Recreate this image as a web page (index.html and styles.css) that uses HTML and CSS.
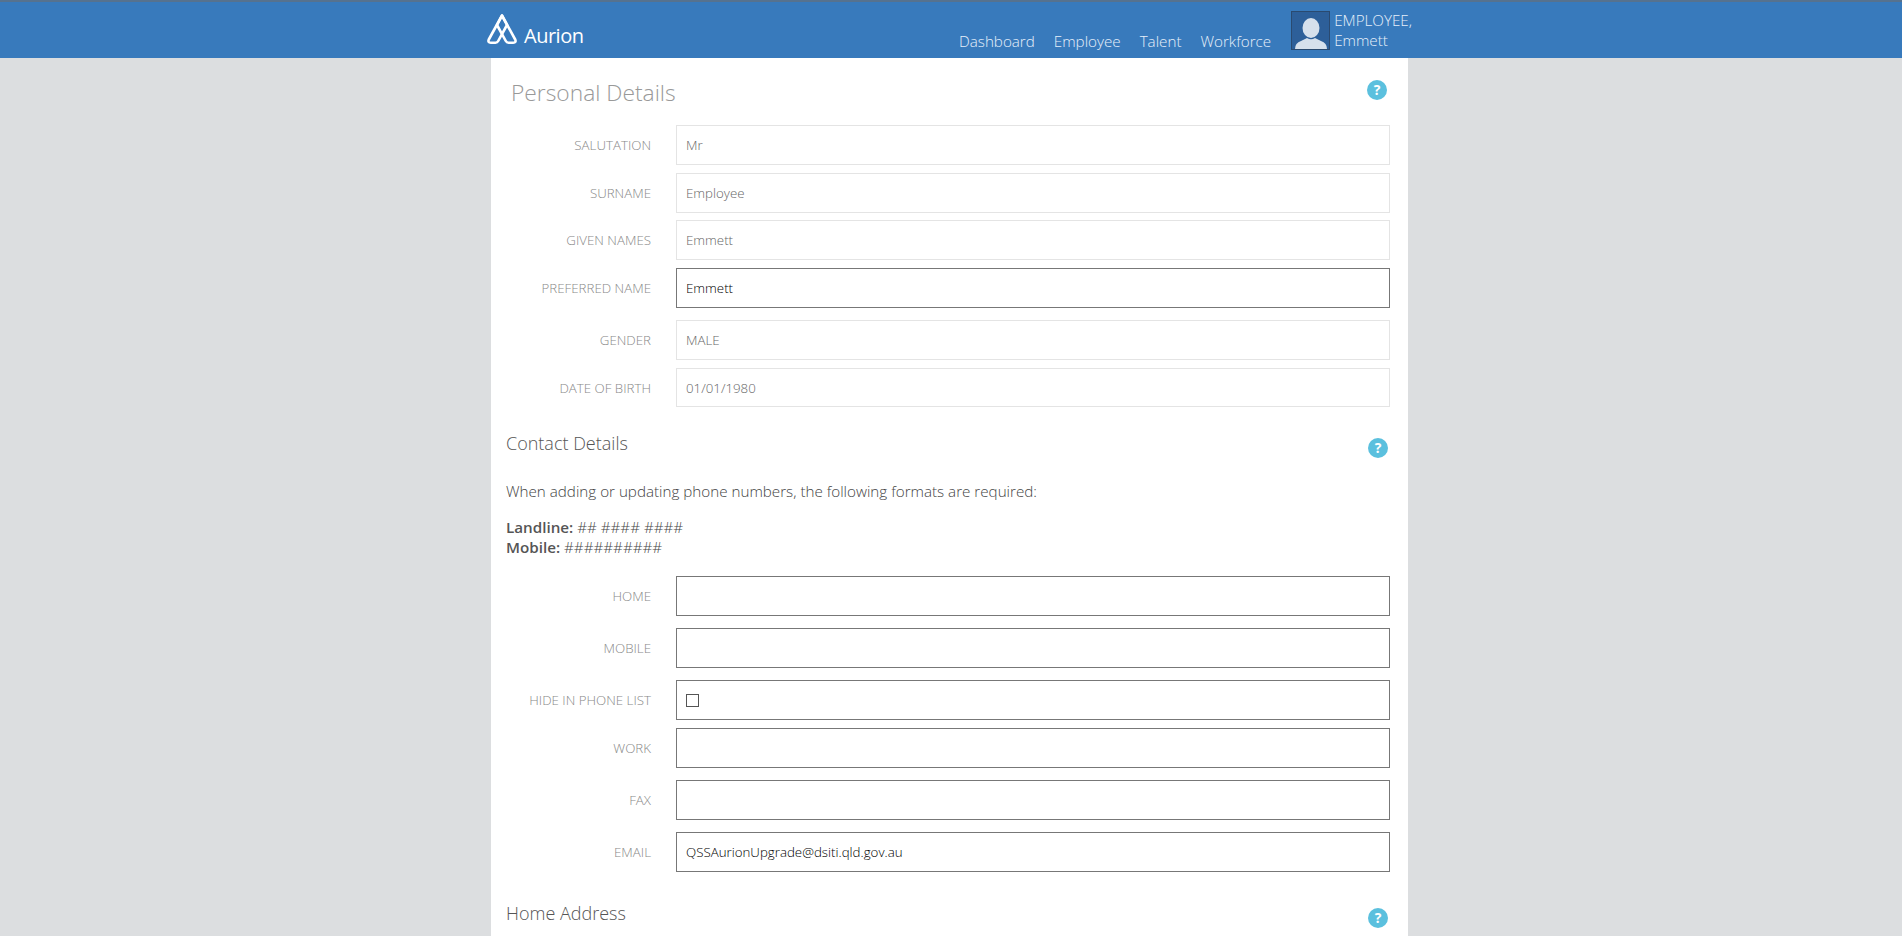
FILE: index.html
```html
<!DOCTYPE html>
<html>
<head>
    <meta charset="UTF-8">
    <title>Personal Details</title>
    <link rel="stylesheet" href="styles.css">
</head>
<body>
<header class="topbar">
    <div class="topbar-inner">
        <a class="logo" href="#">
            <svg class="logo-mark" viewBox="0 0 30 30" fill="none" stroke="#fff" stroke-width="2.600" stroke-linejoin="round">
                <path d="M15 1.500 L1.800 25.500 Q0.500 28.700 3.800 28.700 L8.500 28.700 Q10.300 28.700 11.200 27 L20 11 Z"/>
                <path d="M15 1.500 L28.200 25.500 Q29.500 28.700 26.200 28.700 L21.500 28.700 Q19.700 28.700 18.800 27 L10 11 Z"/>
            </svg>
            <span class="logo-text">Aurion</span>
        </a>
        <nav class="nav">
            <a href="#">Dashboard</a>
            <a href="#">Employee</a>
            <a href="#">Talent</a>
            <a href="#">Workforce</a>
            <div class="user">
                <div class="avatar">
                    <svg viewBox="0 0 37 37" fill="#d6e0ec">
                        <ellipse cx="19" cy="16" rx="8.500" ry="10"/>
                        <path d="M3 37 Q3 31 9 29 L15 26 Q19 28.500 23 26 L29 29 Q35 31 35 37 Z"/>
                    </svg>
                </div>
                <div class="user-name">EMPLOYEE,<br>Emmett</div>
            </div>
        </nav>
    </div>
</header>

<main class="panel">
    <div class="page-head">
        <h1>Personal Details</h1>
        <span class="help">?</span>
    </div>

    <form class="form">
        <div class="row"><label>SALUTATION</label><input class="ro" type="text" value="Mr" readonly></div>
        <div class="row row-tight"><label>SURNAME</label><input class="ro" type="text" value="Employee" readonly></div>
        <div class="row"><label>GIVEN NAMES</label><input class="ro" type="text" value="Emmett" readonly></div>
        <div class="row row-gap"><label>PREFERRED NAME</label><input type="text" value="Emmett"></div>
        <div class="row"><label>GENDER</label><input class="ro" type="text" value="MALE" readonly></div>
        <div class="row row-short"><label>DATE OF BIRTH</label><input class="ro" type="text" value="01/01/1980" readonly></div>

        <div class="section-head contact-head">
            <h2>Contact Details</h2>
            <span class="help">?</span>
        </div>
        <p class="note">When adding or updating phone numbers, the following formats are required:</p>
        <p class="formats"><b>Landline:</b> ## #### ####<br><b>Mobile:</b> ##########</p>

        <div class="row row-gap"><label>HOME</label><input type="text"></div>
        <div class="row row-gap"><label>MOBILE</label><input type="text"></div>
        <div class="row"><label>HIDE IN PHONE LIST</label><div class="check-box"><input class="check" type="checkbox"></div></div>
        <div class="row row-gap"><label>WORK</label><input type="text"></div>
        <div class="row row-gap"><label>FAX</label><input type="text"></div>
        <div class="row"><label>EMAIL</label><input type="text" value="QSSAurionUpgrade@dsiti.qld.gov.au"></div>

        <div class="section-head address-head">
            <h2>Home Address</h2>
            <span class="help">?</span>
        </div>
    </form>
</main>
</body>
</html>
```

FILE: styles.css
```css
html, body {
    height: 100%;
}
body {
    display: flex;
    flex-direction: column;
    margin: 0;
    background-color: #dcdee0;
    font-family: "Open Sans", sans-serif;
    font-size: 15.200px;
    font-weight: 300;
    color: #444;
}
a {
    text-decoration: none;
    color: inherit;
}

/* top bar */
.topbar {
    flex: none;
    height: 56px;
    background-color: #387abc;
    border-top: 2px solid #56728f;
}
.topbar-inner {
    display: flex;
    justify-content: space-between;
    width: 925px;
    height: 100%;
    margin-left: 487px;
}
.logo {
    display: flex;
    align-items: flex-end;
    height: 42px;
    color: #fff;
}
.logo-mark {
    width: 30px;
    height: 30px;
}
.logo-text {
    margin-left: 7px;
    margin-bottom: -7px;
    font-weight: 400;
    font-size: 20px;
    line-height: 30px;
    letter-spacing: -0.5px;
}
.nav {
    display: flex;
    align-items: flex-start;
    gap: 19px;
    color: #e6effa;
    line-height: 20px;
}
.nav > a {
    margin-top: 29px;
}
.user {
    display: flex;
    gap: 4px;
    margin-top: 9px;
    margin-left: 1px;
}
.avatar {
    width: 37px;
    height: 37px;
    background-color: #2d5f99;
    border: 1px solid #2a4a70;
}
.avatar svg {
    display: block;
    width: 37px;
    height: 37px;
}
.user-name {
    margin-top: -1px;
    white-space: nowrap;
}

/* main panel */
.panel {
    flex: 1;
    width: 917px;
    margin-left: 491px;
    background-color: #fff;
    box-sizing: border-box;
    padding: 0 18px 0 15px;
}
.page-head {
    display: flex;
    justify-content: space-between;
    height: 67px;
    padding-left: 5px;
}
h1 {
    margin: 0;
    padding-top: 19px;
    font-weight: 300;
    font-size: 22.800px;
    line-height: 32px;
    color: #999;
}
h2 {
    margin: 0;
    font-weight: 300;
    font-size: 18px;
    line-height: 24px;
    color: #555;
}
.help {
    width: 20px;
    height: 20px;
    margin-top: 22px;
    margin-right: 3px;
    border-radius: 50%;
    background-color: #5bc0de;
    color: #fff;
    font-weight: 700;
    font-size: 14px;
    line-height: 20px;
    text-align: center;
}

/* form rows */
.row {
    display: flex;
    align-items: center;
    height: 40px;
    margin-bottom: 8px;
}
.row-gap {
    margin-bottom: 12px;
}
.row-tight {
    margin-bottom: 7px;
}
.row-short {
    height: 39px;
}
.row label {
    flex: none;
    width: 145px;
    margin-right: 25px;
    text-align: right;
    font-size: 13.300px;
    color: #888;
}
.row input[type="text"], .check-box {
    flex: none;
    width: 714px;
    height: 100%;
    box-sizing: border-box;
    padding: 0 9px;
    border: 1px solid #777;
    outline: none;
    font-family: "Open Sans", sans-serif;
    font-weight: 300;
    font-size: 13.300px;
    color: #000;
}
.row input.ro {
    border-color: #e4e4e4;
    color: #666;
}
.check-box {
    display: flex;
    align-items: center;
}
.check {
    appearance: none;
    width: 13px;
    height: 13px;
    margin: 0;
    border: 1px solid #555;
}

.section-head {
    display: flex;
    justify-content: space-between;
}
.section-head .help {
    margin-right: 2px;
}
.contact-head {
    height: 50px;
    margin-top: 24px;
}
.contact-head .help {
    margin-top: 7px;
}
.address-head {
    margin-top: 29px;
}
.address-head .help {
    margin-top: 7px;
}
.note {
    margin: 0;
    line-height: 20px;
}
.formats {
    margin: 16px 0 19px;
    line-height: 20px;
}
.formats b {
    font-weight: 600;
    color: #555;
}
```
